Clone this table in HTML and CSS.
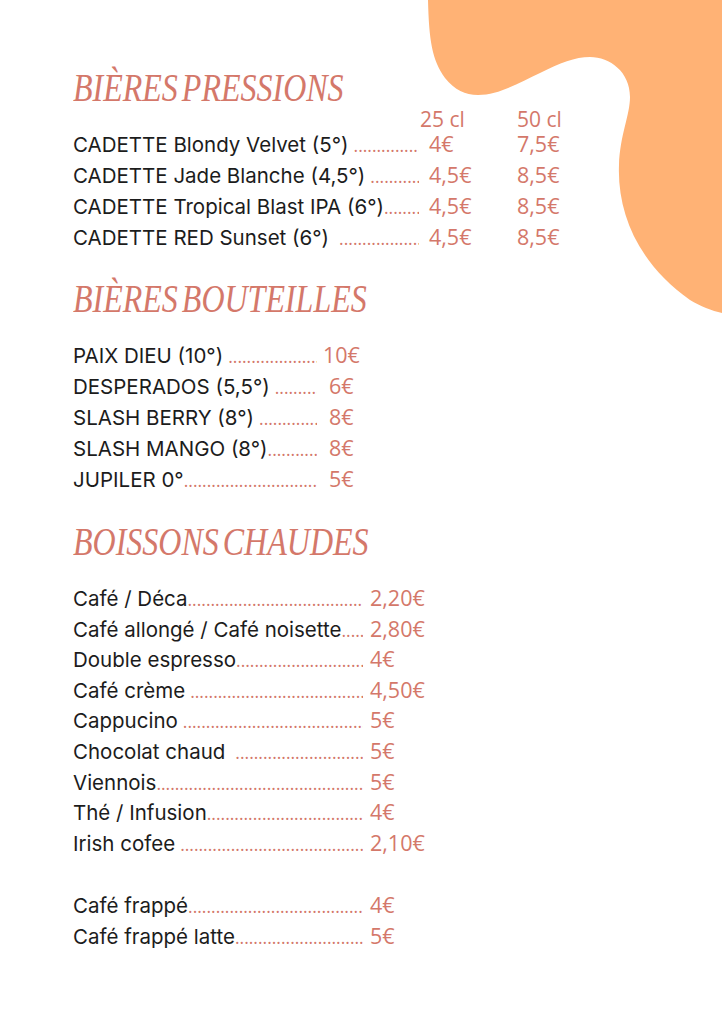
FILE: index.html
```html
<!DOCTYPE html>
<html lang="fr">
<head>
<meta charset="utf-8">
<title>Carte des boissons</title>
<link rel="stylesheet" href="styles.css">
</head>
<body>
<svg class="blob" viewBox="0 0 722 330" width="722" height="330" aria-hidden="true">
  <path d="M428,0 C429,40 432,60 445,78 C455,90 465,95 478,95 C500,95 520,82 540,73 C560,63 575,57 590,57 C610,57 630,72 630,97 C630,115 620,135 619,165 C617,215 640,265 690,300 C700,306 712,311 722,313 L722,0 Z" fill="#FFB275"/>
</svg>
<main class="page">
  <section class="sec sec-pressions">
    <h2 class="title">BIÈRES PRESSIONS</h2>
    <div class="sizes"><span class="size">25 cl</span><span class="size">50 cl</span></div>
    <div class="row"><div class="lead"><span class="name">CADETTE Blondy Velvet (5°)</span><span class="dots sp"></span></div><span class="price">4€</span><span class="price">7,5€</span></div>
    <div class="row"><div class="lead"><span class="name">CADETTE Jade Blanche (4,5°)</span><span class="dots sp"></span></div><span class="price">4,5€</span><span class="price">8,5€</span></div>
    <div class="row"><div class="lead"><span class="name">CADETTE Tropical Blast IPA (6°)</span><span class="dots"></span></div><span class="price">4,5€</span><span class="price">8,5€</span></div>
    <div class="row"><div class="lead"><span class="name">CADETTE RED Sunset (6°)</span><span class="dots sp2"></span></div><span class="price">4,5€</span><span class="price">8,5€</span></div>
  </section>

  <section class="sec sec-bouteilles">
    <h2 class="title">BIÈRES BOUTEILLES</h2>
    <div class="row"><div class="lead"><span class="name">PAIX DIEU (10°)</span><span class="dots sp"></span></div><span class="price wide">10€</span></div>
    <div class="row"><div class="lead"><span class="name">DESPERADOS (5,5°)</span><span class="dots sp"></span></div><span class="price">6€</span></div>
    <div class="row"><div class="lead"><span class="name">SLASH BERRY (8°)</span><span class="dots sp"></span></div><span class="price">8€</span></div>
    <div class="row"><div class="lead"><span class="name">SLASH MANGO (8°)</span><span class="dots"></span></div><span class="price">8€</span></div>
    <div class="row"><div class="lead"><span class="name">JUPILER 0°</span><span class="dots"></span></div><span class="price">5€</span></div>
  </section>

  <section class="sec sec-chaudes">
    <h2 class="title">BOISSONS CHAUDES</h2>
    <div class="row"><div class="lead"><span class="name">Café / Déca</span><span class="dots"></span></div><span class="price">2,20€</span></div>
    <div class="row"><div class="lead"><span class="name">Café allongé / Café noisette</span><span class="dots"></span></div><span class="price">2,80€</span></div>
    <div class="row"><div class="lead"><span class="name">Double espresso</span><span class="dots"></span></div><span class="price">4€</span></div>
    <div class="row"><div class="lead"><span class="name">Café crème</span><span class="dots sp"></span></div><span class="price">4,50€</span></div>
    <div class="row"><div class="lead"><span class="name">Cappucino</span><span class="dots sp"></span></div><span class="price">5€</span></div>
    <div class="row"><div class="lead"><span class="name">Chocolat chaud</span><span class="dots sp2"></span></div><span class="price">5€</span></div>
    <div class="row"><div class="lead"><span class="name">Viennois</span><span class="dots"></span></div><span class="price">5€</span></div>
    <div class="row"><div class="lead"><span class="name">Thé / Infusion</span><span class="dots"></span></div><span class="price">4€</span></div>
    <div class="row"><div class="lead"><span class="name">Irish cofee</span><span class="dots sp"></span></div><span class="price">2,10€</span></div>
    <div class="row blank"></div>
    <div class="row"><div class="lead"><span class="name">Café frappé</span><span class="dots"></span></div><span class="price">4€</span></div>
    <div class="row"><div class="lead"><span class="name">Café frappé latte</span><span class="dots"></span></div><span class="price">5€</span></div>
  </section>
</main>
</body>
</html>
```

FILE: styles.css
```css
html, body {
  margin: 0;
  padding: 0;
  background: #ffffff;
}

body {
  position: relative;
  width: 722px;
  min-height: 1024px;
  overflow: hidden;
  font-family: "Inter", "Liberation Sans", sans-serif;
  color: #1c1c1c;
}

.blob {
  position: absolute;
  top: 0;
  left: 0;
  z-index: 0;
}

.page {
  position: relative;
  z-index: 1;
  padding: 66px 0 0 73px;
}

.sec {
  margin: 0;
}

.title {
  margin: 0;
  font-family: "Liberation Serif", serif;
  font-style: italic;
  font-weight: normal;
  font-size: 40px;
  line-height: 44px;
  letter-spacing: 0;
  word-spacing: -5px;
  color: #D4786A;
  transform: scaleX(0.8);
  transform-origin: left center;
  white-space: nowrap;
}

.sizes {
  display: flex;
  padding-left: 347px;
  height: 18px;
  margin: 0;
  font-family: "Open Sans", sans-serif;
  font-size: 21px;
  line-height: 18px;
  color: #D4786A;
}

.size {
  width: 97px;
}

.row {
  display: flex;
  align-items: baseline;
  height: 31px;
  line-height: 31px;
  font-size: 20.5px;
}

.lead {
  display: flex;
  align-items: baseline;
  flex: none;
  min-width: 0;
}

.name {
  flex: none;
  white-space: nowrap;
}

.dots {
  flex: 1;
  min-width: 0;
  overflow: hidden;
  white-space: nowrap;
  font-family: "Open Sans", sans-serif;
  font-size: 17.5px;
  color: #D4786A;
  letter-spacing: 0;
}

.dots::after {
  content: "........................................................................................................";
}

.dots.sp {
  margin-left: 5px;
}

.dots.sp2 {
  margin-left: 10px;
}

.price {
  box-sizing: border-box;
  font-family: "Open Sans", sans-serif;
  font-size: 21.5px;
  color: #D4786A;
  white-space: nowrap;
}

/* Section 1 : bières pressions */
.sec-pressions .lead {
  width: 346px;
}

.sec-pressions .price {
  width: 98px;
  padding-left: 10px;
}

.sec-pressions .price + .price {
  padding-left: 0;
}

/* Section 2 : bières bouteilles */
.sec-bouteilles {
  margin-top: 25px;
}

.sec-bouteilles .title {
  margin-bottom: 18px;
}

.sec-bouteilles .lead {
  width: 244px;
}

.sec-bouteilles .price {
  padding-left: 12px;
}

.sec-bouteilles .price.wide {
  padding-left: 6px;
}

/* Section 3 : boissons chaudes */
.sec-chaudes {
  margin-top: 26px;
}

.sec-chaudes .title {
  margin-bottom: 19px;
}

.sec-chaudes .row {
  height: 30.6px;
  line-height: 30.6px;
}

.sec-chaudes .row.blank {
  height: 32px;
}

.sec-chaudes .lead {
  width: 290px;
}

.sec-chaudes .price {
  padding-left: 7px;
}
```
